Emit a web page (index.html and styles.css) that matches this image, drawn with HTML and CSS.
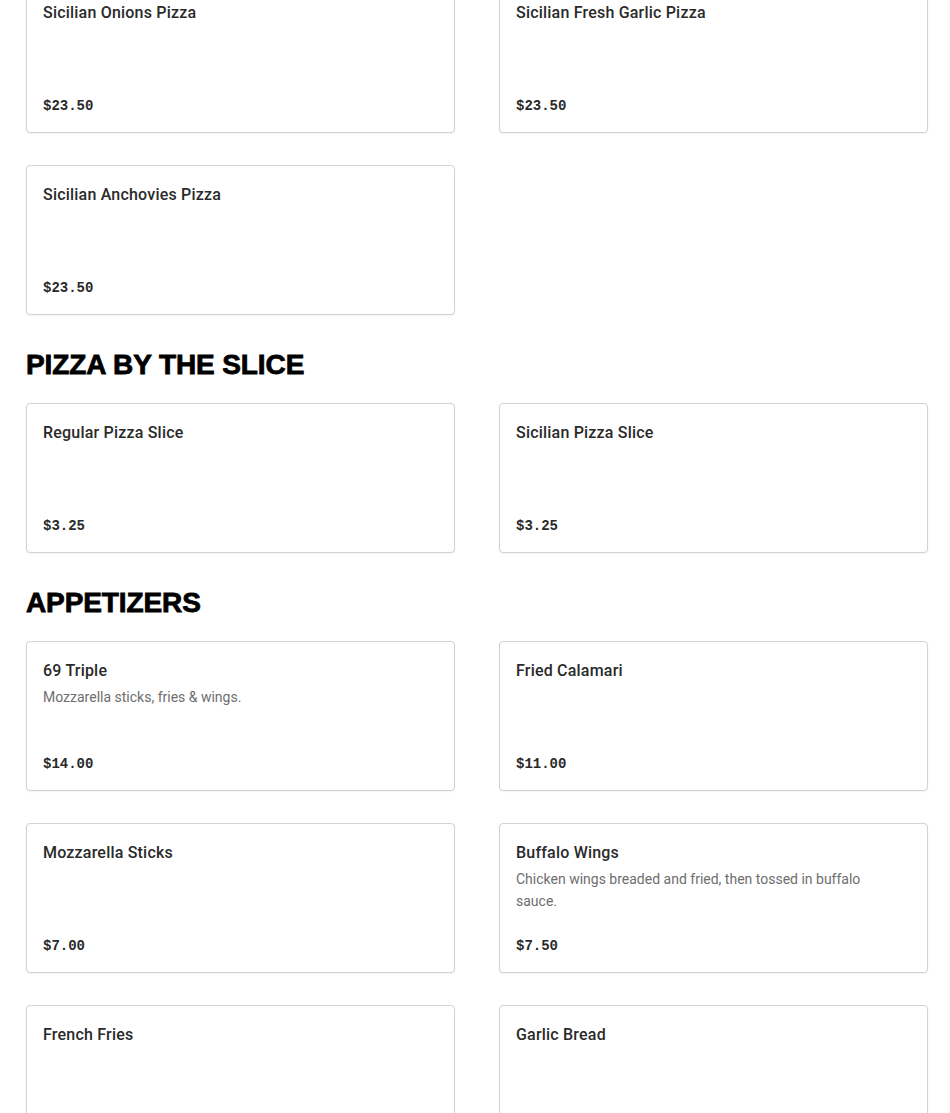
FILE: index.html
```html
<!DOCTYPE html>
<html>
<head>
<meta charset="utf-8">
<link rel="stylesheet" href="styles.css">
</head>
<body>
<main class="menu">
  <section class="section first">
    <div class="grid">
      <div class="card"><div class="name">Sicilian Onions Pizza</div><div class="price">$23.50</div></div>
      <div class="card"><div class="name">Sicilian Fresh Garlic Pizza</div><div class="price">$23.50</div></div>
      <div class="card"><div class="name">Sicilian Anchovies Pizza</div><div class="price">$23.50</div></div>
    </div>
  </section>
  <section class="section">
    <h2 class="heading">PIZZA BY THE SLICE</h2>
    <div class="grid">
      <div class="card"><div class="name">Regular Pizza Slice</div><div class="price">$3.25</div></div>
      <div class="card"><div class="name">Sicilian Pizza Slice</div><div class="price">$3.25</div></div>
    </div>
  </section>
  <section class="section">
    <h2 class="heading">APPETIZERS</h2>
    <div class="grid">
      <div class="card"><div class="name">69 Triple</div><div class="desc">Mozzarella sticks, fries &amp; wings.</div><div class="price">$14.00</div></div>
      <div class="card"><div class="name">Fried Calamari</div><div class="price">$11.00</div></div>
      <div class="card"><div class="name">Mozzarella Sticks</div><div class="price">$7.00</div></div>
      <div class="card"><div class="name">Buffalo Wings</div><div class="desc">Chicken wings breaded and fried, then tossed in buffalo sauce.</div><div class="price">$7.50</div></div>
      <div class="card"><div class="name">French Fries</div><div class="price">$6.00</div></div>
      <div class="card"><div class="name">Garlic Bread</div><div class="price">$6.00</div></div>
    </div>
  </section>
</main>
</body>
</html>
```
FILE: styles.css
```css
html, body {
  margin: 0;
  padding: 0;
  background: #ffffff;
}
body {
  font-family: Roboto, "Liberation Sans", sans-serif;
  color: #2a2a2a;
}
.menu {
  padding: 0 22px 0 26px;
  margin-top: -17px;
}
.grid {
  display: grid;
  grid-template-columns: 1fr 1fr;
  column-gap: 44px;
  row-gap: 32px;
}
.heading {
  margin: 34px 0 22px;
  font-family: "Liberation Sans", Arial, sans-serif;
  font-weight: 900;
  font-size: 28px;
  line-height: 32px;
  color: #000;
  letter-spacing: -0.1px;
  -webkit-text-stroke: 0.8px #000;
}
.card {
  box-sizing: border-box;
  height: 150px;
  border: 1px solid #d2d2d2;
  border-radius: 4px;
  padding: 17px 16px 15px;
  display: flex;
  flex-direction: column;
  background: #fff;
  box-shadow: 0 1px 2px rgba(0,0,0,0.05);
}
.name {
  font-size: 16px;
  line-height: 24px;
  font-weight: 500;
  letter-spacing: 0.2px;
  color: #2a2a2a;
}
.desc {
  margin-top: 3px;
  font-size: 14px;
  line-height: 22px;
  color: #6e6e6e;
  padding-right: 40px;
}
.price {
  margin-top: auto;
  font-family: "Liberation Mono", monospace;
  font-weight: 700;
  font-size: 14px;
  line-height: 22px;
  color: #2a2a2a;
}
```
